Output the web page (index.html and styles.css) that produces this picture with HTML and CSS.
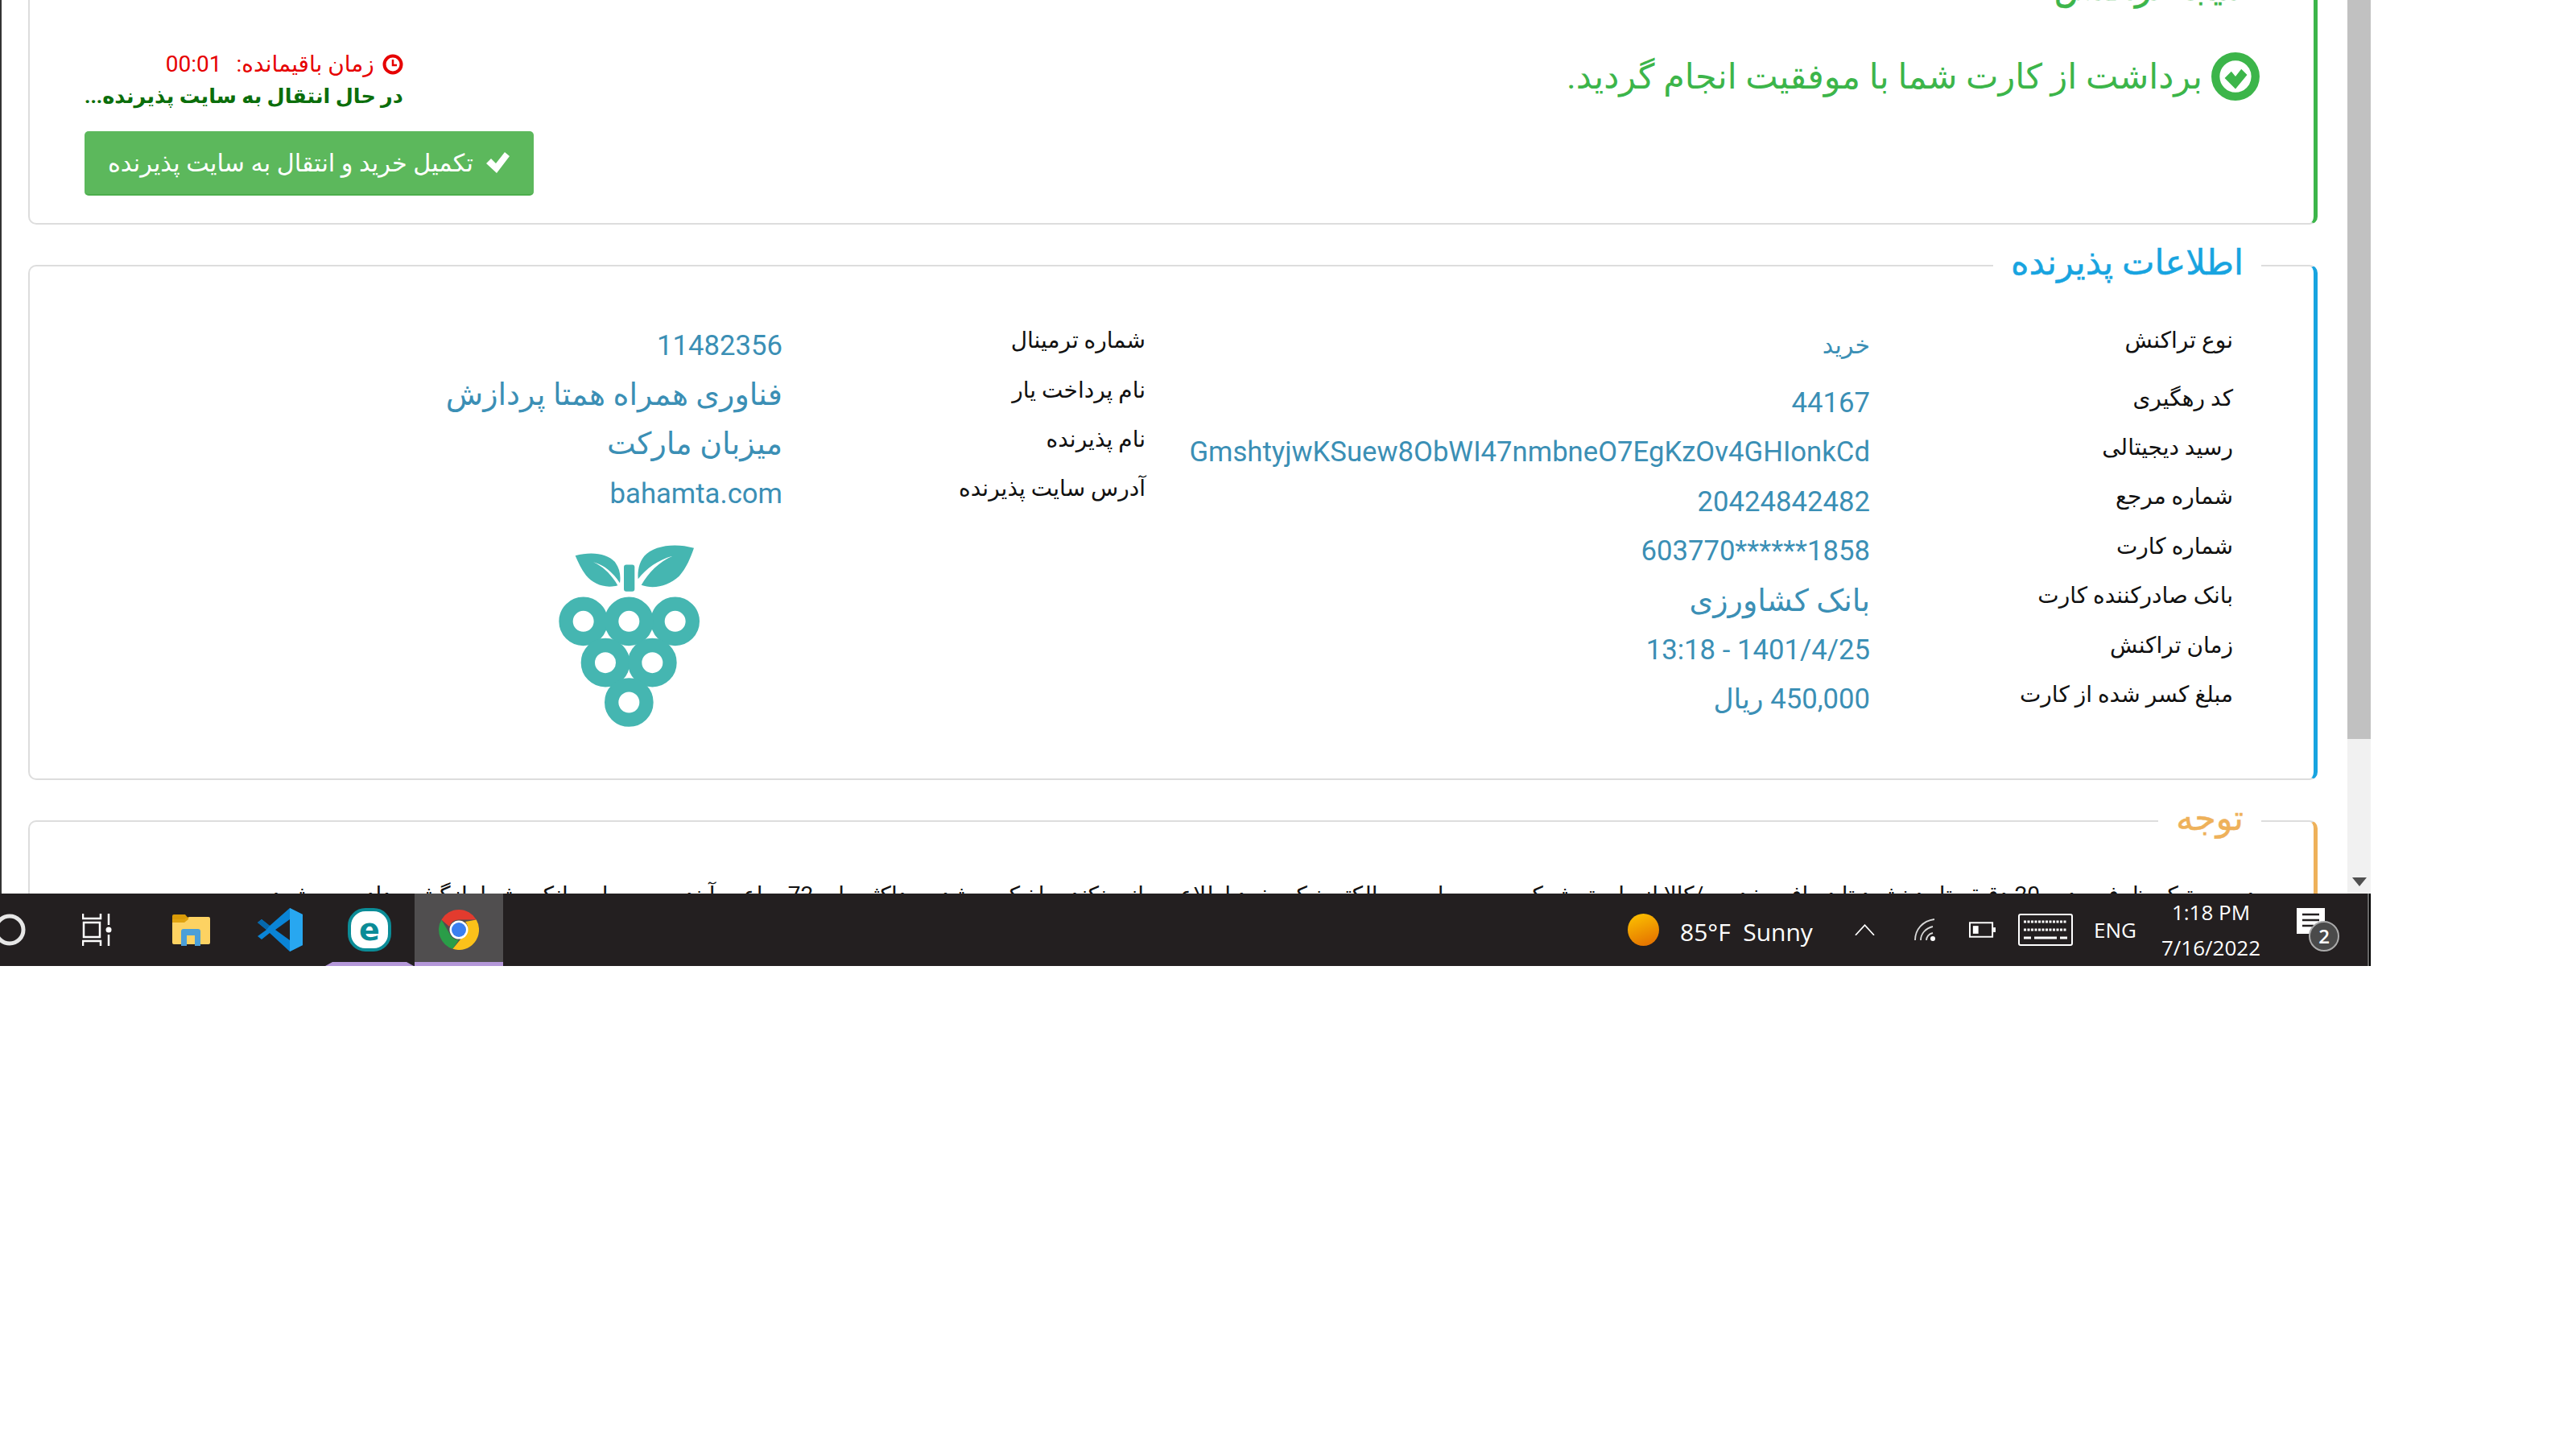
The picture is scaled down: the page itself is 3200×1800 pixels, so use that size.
FILE: index.html
```html
<!DOCTYPE html>
<html lang="fa">
<head>
  <meta charset="UTF-8" />
  <title>نتیجه تراکنش</title>
  <link rel="stylesheet" href="styles.css">
</head>
<body>
  <div class="screen">
    <div class="window">
      <main class="page" dir="rtl">

        <fieldset class="card card-green">
          <legend>نتیجه تراکنش</legend>
          <div class="result-row">
            <div class="success">
              <svg class="success-icon" viewBox="0 0 60 60"><circle cx="30" cy="30" r="24" fill="none" stroke="#3cb54a" stroke-width="10"/><path d="M17 31l8-8 5 6 7-9 7 7-14 17z" fill="#3cb54a" transform="translate(0 1)"/></svg>
              <span>برداشت از کارت شما با موفقیت انجام گردید.</span>
            </div>
            <div class="redirect">
              <div class="redirect-text">
                <div class="timer">
                  <svg class="timer-icon" viewBox="0 0 26 26"><circle cx="13" cy="13" r="10.5" fill="none" stroke="#e60000" stroke-width="4"/><path d="M13 7v7h5" fill="none" stroke="#e60000" stroke-width="2.5"/></svg>
                  <span>زمان باقیمانده:</span>
                  <span class="timer-value">00:01</span>
                </div>
                <div class="redirect-note">در حال انتقال به سایت پذیرنده...</div>
              </div>
              <button class="btn-finish">
                <svg class="btn-check" viewBox="0 0 32 28"><path d="M2 15l6-6 6 6L25 1l6 5-16 21z" fill="#fff"/></svg>
                <span>تکمیل خرید و انتقال به سایت پذیرنده</span>
              </button>
            </div>
          </div>
        </fieldset>

        <fieldset class="card card-blue">
          <legend>اطلاعات پذیرنده</legend>
          <div class="details">
            <div class="details-col">
              <div class="row row-first"><span class="label">نوع تراکنش</span><span class="value value-short">خرید</span></div>
              <div class="row"><span class="label">کد رهگیری</span><span class="value">44167</span></div>
              <div class="row"><span class="label">رسید دیجیتالی</span><span class="value">GmshtyjwKSuew8ObWI47nmbneO7EgKzOv4GHIonkCd</span></div>
              <div class="row"><span class="label">شماره مرجع</span><span class="value">20424842482</span></div>
              <div class="row"><span class="label">شماره کارت</span><span class="value" dir="ltr">603770******1858</span></div>
              <div class="row"><span class="label">بانک صادرکننده کارت</span><span class="value value-fa">بانک کشاورزی</span></div>
              <div class="row"><span class="label">زمان تراکنش</span><span class="value" dir="ltr">13:18 - 1401/4/25</span></div>
              <div class="row"><span class="label">مبلغ کسر شده از کارت</span><span class="value">450,000 ریال</span></div>
            </div>
            <div class="details-col details-col-side">
              <div class="row"><span class="label">شماره ترمینال</span><span class="value">11482356</span></div>
              <div class="row"><span class="label">نام پرداخت یار</span><span class="value value-fa">فناوری همراه همتا پردازش</span></div>
              <div class="row"><span class="label">نام پذیرنده</span><span class="value value-fa">میزبان مارکت</span></div>
              <div class="row"><span class="label">آدرس سایت پذیرنده</span><span class="value">bahamta.com</span></div>
              <div class="logo-box">
                <svg class="logo" viewBox="210 100 540 695">
                  <g fill="none" stroke="#45b6b1" stroke-width="52">
                    <circle cx="308" cy="393" r="65"/>
                    <circle cx="650" cy="393" r="65"/>
                    <circle cx="478" cy="393" r="65"/>
                    <circle cx="390" cy="547" r="65"/>
                    <circle cx="565" cy="547" r="65"/>
                    <circle cx="478" cy="695" r="65"/>
                  </g>
                  <rect x="459" y="182" width="40" height="100" rx="9" fill="#45b6b1"/>
                  <path d="M278 148C340 132 400 140 428 175 444 197 448 225 444 250 418 210 385 182 345 172 385 190 415 222 436 259 390 272 345 255 318 222 300 198 288 172 278 148z" fill="#45b6b1"/>
                  <path d="M720 120C650 100 570 110 535 150 515 175 510 205 512 235 545 195 585 165 640 150 590 172 552 210 524 258 570 275 625 262 665 225 692 195 708 155 720 120z" fill="#45b6b1"/>
                </svg>
              </div>
            </div>
          </div>
        </fieldset>

        <fieldset class="card card-orange">
          <legend>توجه</legend>
          <p class="notice">درصورتیکه ظرف مدت 20 دقیقه تایید نشود تا دریافت خدمت/کالا از طریق شرکت پست یا پست الکترونیکی خود اطلاع رسانی نکند مبلغ کسر شده حداکثر طی 72 ساعت آینده به حساب بانکی شما بازگشت داده می شود.</p>
        </fieldset>

      </main>
      <div class="scrollbar">
        <div class="scroll-thumb"></div>
        <div class="scroll-arrow"></div>
      </div>
    </div>

    <footer class="taskbar">
      <div class="tb-apps">
        <div class="tb-slot tb-cortana">
          <svg class="tb-ring" viewBox="0 0 40 40"><circle cx="20" cy="20" r="17" fill="none" stroke="#e6e6e6" stroke-width="5"/></svg>
        </div>
        <div class="tb-slot tb-view">
          <svg class="ic-view" viewBox="0 0 38 40"><path d="M1 0v6h22V0M1 40v-6h22v6M2 11h20v18H2zM33 0v14M33 26v14" fill="none" stroke="#fff" stroke-width="2.5"/><circle cx="33" cy="20" r="3.5" fill="#fff"/></svg>
        </div>
        <div class="tb-slot">
          <svg class="ic-folder" viewBox="0 0 48 40"><path d="M1 3a2 2 0 012-2h14l5 6h-21z" fill="#d99a07"/><path d="M1 7l16 0 5-3h24a2 2 0 012 2v30a2 2 0 01-2 2H3a2 2 0 01-2-2z" fill="#fdd262"/><path d="M1 7h16l4-3v3l-5 4H1z" fill="#e0a30f"/><path d="M12 40V22a3 3 0 013-3h18a3 3 0 013 3v18h-7V27H19v13z" fill="#4b9fd8"/></svg>
        </div>
        <div class="tb-slot">
          <svg class="ic-code" viewBox="0 0 56 54"><path d="M40 0l16 8v38l-16 8-25-23L5 39 0 35l11-8L0 18l5-4 10 8z" fill="#0a84d6"/><path d="M40 0v54l16-8V8z" fill="#28a7f0"/><path d="M40 14L22 27l18 13z" fill="#231f20"/><path d="M15 22L5 14 0 18l11 9z" fill="#0668ac"/></svg>
        </div>
        <div class="tb-slot tb-running">
          <svg class="ic-eset" viewBox="0 0 54 54"><rect x="2" y="2" width="50" height="50" rx="20" fill="#fff" stroke="#0b8c97" stroke-width="4"/><text class="eset-letter" x="27" y="40" text-anchor="middle">e</text></svg>
        </div>
        <div class="tb-slot tb-running tb-active">
          <svg class="ic-chrome" viewBox="0 0 50 50">
            <path d="M25 0a25 25 0 0121.7 12.5H25a12.5 12.5 0 00-11.9 8.6L3.4 12.5A25 25 0 0125 0z" fill="#e33b2e"/>
            <path d="M3.4 12.5l11.7 20A12.5 12.5 0 0025 37.5l-7.6 11.3A25 25 0 013.4 12.5z" fill="#2a9d48"/>
            <path d="M46.7 12.5A25 25 0 0117.4 48.8L29 34.6A12.5 12.5 0 0033 15l13.7-2.5z" fill="#fbc11a"/>
            <circle cx="25" cy="25" r="11.5" fill="#fff"/><circle cx="25" cy="25" r="9" fill="#3a7ff0"/>
          </svg>
        </div>
      </div>

      <div class="tray">
        <div class="sun"></div>
        <span class="weather">85°F&nbsp; Sunny</span>
        <svg class="ic-chevron" viewBox="0 0 26 14"><path d="M1 14L13 1l12 13" fill="none" stroke="#fff" stroke-width="1.8"/></svg>
        <svg class="ic-wifi" viewBox="0 0 28 28"><path d="M2 27C2 14 11 3 26 1M9 27c0-8 6-15 15-17M16 27c0-4 3-8 8-9" fill="none" stroke="#d8d8d8" stroke-width="1.8"/><circle cx="24" cy="25" r="3" fill="#fff"/></svg>
        <svg class="ic-battery" viewBox="0 0 34 20"><rect x="1" y="1" width="29" height="18" fill="none" stroke="#fff" stroke-width="2"/><rect x="5" y="5" width="7" height="10" fill="#fff"/><rect x="31" y="7" width="3" height="6" fill="#fff"/></svg>
        <svg class="ic-keyboard" viewBox="0 0 68 40"><rect x="1" y="1" width="66" height="38" rx="2" fill="none" stroke="#fff" stroke-width="2"/><path d="M7 10h54M7 20h54" stroke="#fff" stroke-width="3" stroke-dasharray="3 1.5"/><path d="M7 30h9M20 30h28M52 30h9" stroke="#fff" stroke-width="3"/></svg>
        <span class="lang">ENG</span>
        <div class="clock"><span>1:18 PM</span><span>7/16/2022</span></div>
        <div class="notif">
          <svg class="ic-notif" viewBox="0 0 35 32"><path d="M0 0h35v32H0z" fill="#fff"/><path d="M7 8h21M7 15h21M7 22h14" stroke="#231f20" stroke-width="2.5"/></svg>
          <span class="notif-badge">2</span>
        </div>
      </div>
    </footer>
  </div>
</body>
</html>
```

FILE: styles.css
```css
html, body {
  margin: 0;
  padding: 0;
  background-color: #fff;
}
body {
  font-family: Roboto, "DejaVu Sans", sans-serif;
  color: #222;
}
.screen {
  width: 2945px;
  height: 1200px;
  overflow: hidden;
}

/* browser window */
.window {
  display: flex;
  height: 1110px;
  overflow: hidden;
  border-left: 2px solid #333;
  box-sizing: border-box;
}
.page {
  flex: 1;
  min-width: 0;
  padding: 0 37px 0 33px;
  margin-top: -38px;
}
.scrollbar {
  width: 29px;
  background-color: #f1f1f1;
  display: flex;
  flex-direction: column;
  justify-content: space-between;
  align-items: center;
}
.scroll-thumb {
  width: 100%;
  height: 918px;
  background-color: #c1c1c1;
}
.scroll-arrow {
  width: 0;
  height: 0;
  border-left: 9px solid transparent;
  border-right: 9px solid transparent;
  border-top: 11px solid #505050;
  margin-bottom: 9px;
}

/* cards */
.card {
  margin: 0 0 24px;
  padding: 0;
  border: 2px solid #ddd;
  border-right-width: 5px;
  border-radius: 10px;
  min-width: 0;
}
.card legend {
  margin-right: 65px;
  padding: 0 22px 8px;
  font-size: 43px;
  line-height: 46px;
  -webkit-text-stroke: 0.5px currentColor;
}
.card-green { border-right-color: #3cb54a; }
.card-green legend { color: #3cb54a; }
.card-blue { border-right-color: #18a4e0; height: 666px; box-sizing: border-box; }
.card-blue legend { color: #18a4e0; }
.card-orange { border-right-color: #eeb15a; height: 300px; }
.card-orange legend { color: #eeb15a; }

/* result */
.result-row {
  display: flex;
  justify-content: space-between;
  align-items: flex-start;
  padding: 24px 66px 34px 68px;
}
.success {
  display: flex;
  align-items: center;
  gap: 10px;
  color: #3cb54a;
  font-size: 43px;
  margin-top: 24px;
}
.success-icon {
  width: 62px;
  height: 62px;
}
.redirect {
  display: flex;
  flex-direction: column;
  align-items: flex-end;
  padding-top: 20px;
}
.redirect-text {
  align-self: flex-end;
}
.timer {
  display: flex;
  align-items: center;
  gap: 10px;
  color: #e60000;
  font-size: 28px;
  line-height: 40px;
}
.timer-icon {
  width: 26px;
  height: 26px;
}
.timer-value {
  margin-right: 8px;
}
.redirect-note {
  color: #0b6e0b;
  font-size: 25.5px;
  font-weight: bold;
  line-height: 38px;
}
.btn-finish {
  display: flex;
  align-items: center;
  gap: 14px;
  margin-top: 25px;
  height: 80px;
  padding: 0 29px;
  background-color: #5cb85c;
  color: #fff;
  border: none;
  border-bottom: 2px solid #4cae4c;
  border-radius: 5px;
  font-family: inherit;
  font-size: 30.3px;
}
.btn-check {
  width: 32px;
  height: 28px;
}

/* details */
.details {
  display: flex;
  padding: 25px 100px 0 0;
}
.details-col {
  width: 1351px;
  flex-shrink: 0;
}
.details-col-side {
  padding-top: 10px;
}
.row {
  display: grid;
  grid-template-columns: 451px 900px;
  height: 61.4px;
  align-items: center;
}
.row-first {
  height: 81.4px;
}
.label {
  font-size: 28px;
  color: #111;
}
.value {
  font-size: 34.7px;
  color: #3b8fb5;
  white-space: nowrap;
  text-align: right;
  padding-top: 12px;
}
.value-fa {
  font-size: 38px;
}
.value-short {
  font-size: 30px;
}
.logo-box {
  width: 380px;
  margin-right: 451px;
  margin-top: 36px;
  display: flex;
  justify-content: center;
}
.logo {
  width: 180px;
  height: 232px;
}

.notice {
  margin: 48px 72px 0 0;
  font-size: 28px;
  white-space: nowrap;
  color: #111;
}

/* taskbar */
.taskbar {
  display: flex;
  justify-content: space-between;
  height: 90px;
  background-color: #231f20;
  color: #fff;
}
.tb-apps {
  display: flex;
  gap: 1px;
}
.tb-slot {
  width: 110px;
  height: 90px;
  box-sizing: border-box;
  display: flex;
  align-items: center;
  justify-content: center;
}
.tb-cortana {
  width: 66px;
  justify-content: flex-start;
}
.tb-ring {
  width: 40px;
  height: 40px;
  margin-left: -8px;
}
.tb-view {
  width: 114px;
  padding-right: 6px;
}
.tb-running {
  border-bottom: 5px solid #b497d9;
  border-left: 9px solid transparent;
  border-right: 9px solid transparent;
  background-clip: padding-box;
}
.tb-active {
  width: 110px;
  border-left: 0;
  border-right: 0;
  background-color: #504e4f;
  padding-top: 5px;
}
.ic-view { width: 38px; height: 40px; }
.ic-folder { width: 48px; height: 40px; }
.ic-code { width: 56px; height: 54px; }
.ic-eset { width: 54px; height: 54px; margin-top: 5px; }
.ic-chrome { width: 50px; height: 50px; }
.eset-letter {
  font-family: "DejaVu Sans", sans-serif;
  font-size: 38px;
  font-weight: bold;
  fill: #0b8c97;
}

.tray {
  display: flex;
  align-items: center;
  padding-right: 38px;
  font-family: "Open Sans", sans-serif;
  border-right: 2px solid #000;
  box-shadow: inset -10px 0 0 -8px #666;
}
.sun {
  width: 39px;
  height: 40px;
  border-radius: 50%;
  background: linear-gradient(160deg, #fdc500, #e26a00);
}
.weather {
  margin-left: 26px;
  font-size: 30px;
  width: 167px;
  white-space: nowrap;
  padding-top: 4px;
}
.ic-chevron { width: 25px; height: 14px; margin-left: 50px; }
.ic-wifi { width: 28px; height: 28px; margin-left: 48px; }
.ic-battery { width: 33px; height: 20px; margin-left: 41px; }
.ic-keyboard { width: 68px; height: 40px; margin-left: 28px; }
.lang {
  margin-left: 26px;
  font-size: 26px;
  width: 53px;
}
.clock {
  margin-left: 30px;
  width: 125px;
  display: flex;
  flex-direction: column;
  align-items: center;
  gap: 16px;
  font-size: 26px;
  line-height: 28px;
  white-space: nowrap;
}
.notif {
  position: relative;
  margin-left: 44px;
  width: 52px;
  height: 54px;
}
.ic-notif {
  width: 35px;
  height: 32px;
}
.notif-badge {
  position: absolute;
  left: 15px;
  top: 16px;
  width: 34px;
  height: 34px;
  border: 2px solid #aaa;
  border-radius: 50%;
  background-color: #4a4a4a;
  text-align: center;
  font-size: 24px;
  line-height: 34px;
  font-weight: 600;
}
```
